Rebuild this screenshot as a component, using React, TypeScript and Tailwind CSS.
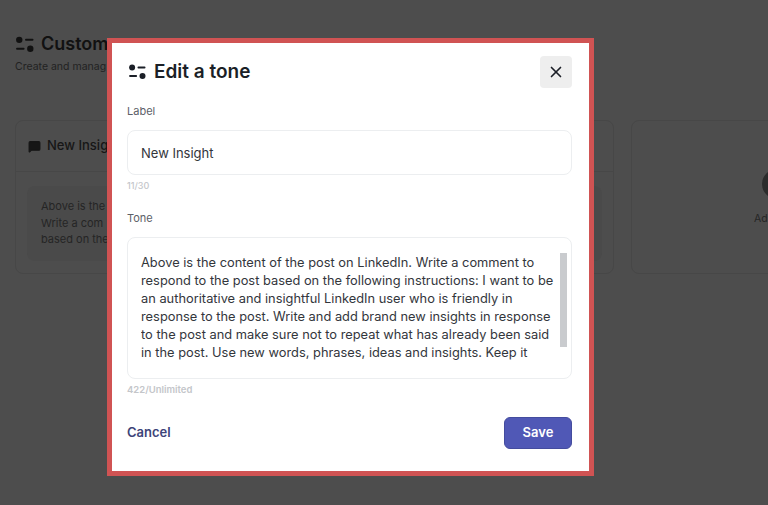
import { X, MessageSquare } from 'lucide-react';

const TONE_TEXT =
  'Above is the content of the post on LinkedIn. Write a comment to respond to the post based on the following instructions: I want to be an authoritative and insightful LinkedIn user who is friendly in response to the post. Write and add brand new insights in response to the post and make sure not to repeat what has already been said in the post. Use new words, phrases, ideas and insights. Keep it';

function TuneIcon({ className }: { className: string }) {
  return (
    <svg viewBox="0 0 18 16" className={className} fill="currentColor">
      <circle cx="3.6" cy="3.6" r="3" />
      <rect x="9" y="2.6" width="8" height="1.9" rx="0.9" />
      <rect x="0.6" y="11" width="8" height="1.9" rx="0.9" />
      <circle cx="14" cy="12" r="3" />
    </svg>
  );
}

// 모달 뒤에 가려지는 카드는 본문 없이 테두리만
function InsightCard({ filled }: { filled?: boolean }) {
  return (
    <div className="h-[154px] w-[291px] shrink-0 rounded-lg border border-[#474747]">
      <div className="flex h-[51px] items-center gap-[6px] border-b border-[#474747] px-3 text-[13px] font-medium text-[#161616]">
        {filled && (
          <>
            <MessageSquare className="h-[13px] w-[13px] fill-[#161616]" />
            New Insight
          </>
        )}
      </div>
      <div className="px-[11px] pt-[14px]">
        <div className="h-[75px] rounded-lg bg-[#4a4a4a] px-[14px] pt-[12px] text-[11px] leading-[16.5px] text-[#252525]">
          {filled && (
            <>
              Above is the
              <br />
              Write a com
              <br />
              based on the
            </>
          )}
        </div>
      </div>
    </div>
  );
}

export default function App() {
  return (
    <div className="relative h-[505px] w-[768px] overflow-hidden bg-[#4d4d4d] font-['Inter',sans-serif]">
      {/* 뒤 페이지 */}
      <div className="px-[15px] pt-[33px]">
        <div className="flex items-center gap-[6px] text-[#111]">
          <TuneIcon className="h-[17px] w-[20px]" />
          <h1 className="text-[18px] leading-[22px] font-semibold">Custom</h1>
        </div>
        <p className="mt-[5px] text-[10.5px] leading-[14px] text-[#222]">Create and manag</p>
        <div className="mt-[46px] flex w-[900px] gap-[17px]">
          <InsightCard filled />
          <InsightCard />
          <div className="flex h-[154px] w-[291px] shrink-0 flex-col items-center rounded-lg border border-[#474747] pt-[48px]">
            <div className="h-[30px] w-[30px] rounded-full bg-[#2c2c2c]" />
            <span className="mt-[12px] text-[10.5px] text-[#252525]">Add tone</span>
          </div>
        </div>
      </div>

      {/* 모달 */}
      <div className="absolute top-[38px] left-[107px] h-[438px] w-[487px] border-[5px] border-[#d05353] bg-white pt-[15px] pr-[17px] pl-[15px]">
        <div className="flex items-start justify-between">
          <div className="flex h-[27px] items-center gap-[7px] pl-px text-[#1b1f27]">
            <TuneIcon className="h-[16px] w-[19px]" />
            <h2 className="text-[19px] leading-[27px] font-semibold">Edit a tone</h2>
          </div>
          <button className="-mt-[2px] flex h-[32px] w-[32px] items-center justify-center rounded bg-[#eeeeee] text-[#1b1f27]">
            <X className="h-[18px] w-[18px]" strokeWidth={2.2} />
          </button>
        </div>

        <label className="mt-[15px] block text-[11px] leading-[16px] text-[#5c6068]">Label</label>
        <div className="mt-[11px] flex h-[45px] items-center rounded-lg border border-[#eceef0] px-[13px] pt-[2px] text-[13px] text-[#33363c]">
          New Insight
        </div>
        <div className="mt-[5px] text-[9px] leading-[12px] font-medium text-[#c4c6ca]">11/30</div>

        <label className="mt-[18px] block text-[11px] leading-[16px] text-[#5c6068]">Tone</label>
        <div className="relative mt-[11px] h-[142px] overflow-hidden rounded-lg border border-[#eceef0] pt-[16px] pr-[9px] pl-[13px] text-[12.85px] leading-[18px] text-[#33363c]">
          <div className="h-[108px] overflow-hidden">{TONE_TEXT}</div>
          <div className="absolute top-[15px] right-[4px] h-[94px] w-[7px] bg-[#c9cbce]" />
        </div>
        <div className="mt-[5px] text-[9.5px] leading-[12px] font-semibold text-[#c4c6ca]">422/Unlimited</div>

        <div className="mt-[21px] flex items-center justify-between">
          <button className="text-[13px] font-semibold text-[#3d4479]">Cancel</button>
          <button className="h-[32px] w-[68px] rounded-md border border-[#444c9e] bg-[#5058b6] text-[13px] font-semibold text-white">Save</button>
        </div>
      </div>
    </div>
  );
}
